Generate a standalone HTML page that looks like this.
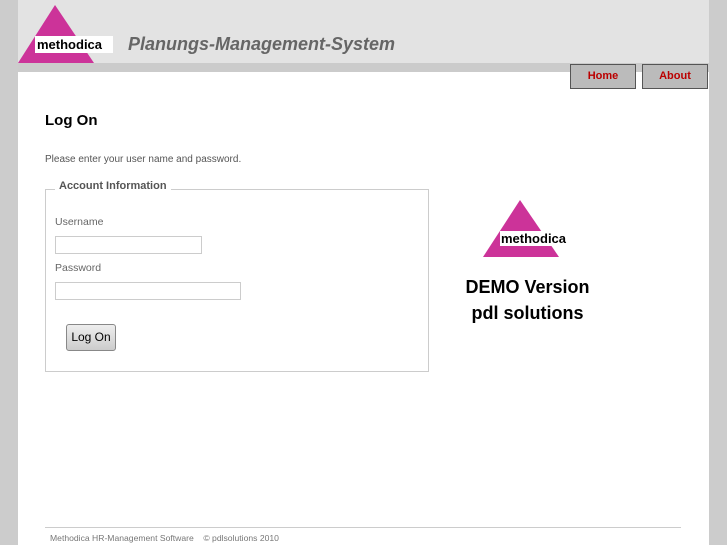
<!DOCTYPE html>
<html><head><style>
*{margin:0;padding:0;box-sizing:border-box}
body{width:727px;height:545px;background:#ccc;position:relative;overflow:hidden;font-family:"Liberation Sans",sans-serif}
.a{position:absolute}
</style></head><body>
<div class="a" style="left:18px;top:0;width:691px;height:545px;background:#fff"></div>
<div class="a" style="left:18px;top:0;width:691px;height:63px;background:#e3e3e3"></div>
<div class="a" style="left:18px;top:63px;width:691px;height:9px;background:#cbcbcb"></div>
<svg class="a" style="left:0;top:0" width="130" height="66">
<polygon points="55,5 18,63 94,63" fill="#cc3399"/>
<rect x="35" y="36" width="78" height="17" fill="#fff"/>
<text x="37" y="49" font-family="Liberation Sans" font-weight="bold" font-size="13" fill="#000">methodica</text>
</svg>
<div class="a" style="left:128px;top:34px;font-size:18px;font-style:italic;font-weight:bold;color:#666">Planungs-Management-System</div>
<div class="a" style="left:570px;top:64px;width:66px;height:25px;background:#bbb;border:1px solid #555;color:#b00;font-size:11px;font-weight:bold;text-align:center;line-height:22px">Home</div>
<div class="a" style="left:642px;top:64px;width:66px;height:25px;background:#bbb;border:1px solid #555;color:#b00;font-size:11px;font-weight:bold;text-align:center;line-height:22px">About</div>
<div class="a" style="left:45px;top:112px;font-size:15px;font-weight:bold;color:#000">Log On</div>
<div class="a" style="left:45px;top:154px;font-size:10px;color:#555">Please enter your user name and password.</div>
<div class="a" style="left:45px;top:189px;width:384px;height:183px;border:1px solid #ccc"></div>
<div class="a" style="left:55px;top:180px;padding:0 4px;background:#fff;font-size:11px;font-weight:bold;color:#555">Account Information</div>
<div class="a" style="left:55px;top:216px;font-size:10.5px;color:#666">Username</div>
<div class="a" style="left:55px;top:236px;width:147px;height:18px;border:1px solid #ccc"></div>
<div class="a" style="left:55px;top:262px;font-size:10.5px;color:#666">Password</div>
<div class="a" style="left:55px;top:282px;width:186px;height:18px;border:1px solid #ccc"></div>
<div class="a" style="left:66px;top:324px;width:50px;height:27px;border:1px solid #888;border-radius:3px;background:linear-gradient(#eee,#ccc);font-size:12px;text-align:center;line-height:25px;color:#000">Log On</div>
<svg class="a" style="left:480px;top:197px" width="100" height="62">
<polygon points="40,3 3,60 79,60" fill="#cc3399"/>
<rect x="20" y="34" width="78" height="15" fill="#fff"/>
<text x="21" y="46" font-family="Liberation Sans" font-weight="bold" font-size="13" fill="#000">methodica</text>
</svg>
<div class="a" style="left:440px;top:274px;width:175px;text-align:center;font-size:18px;font-weight:bold;color:#000;line-height:26px">DEMO Version<br>pdl solutions</div>
<div class="a" style="left:45px;top:527px;width:636px;height:1px;background:#ccc"></div>
<div class="a" style="left:50px;top:533px;font-size:8.6px;color:#777">Methodica HR-Management Software &nbsp;&nbsp; © pdlsolutions 2010</div>
</body></html>
